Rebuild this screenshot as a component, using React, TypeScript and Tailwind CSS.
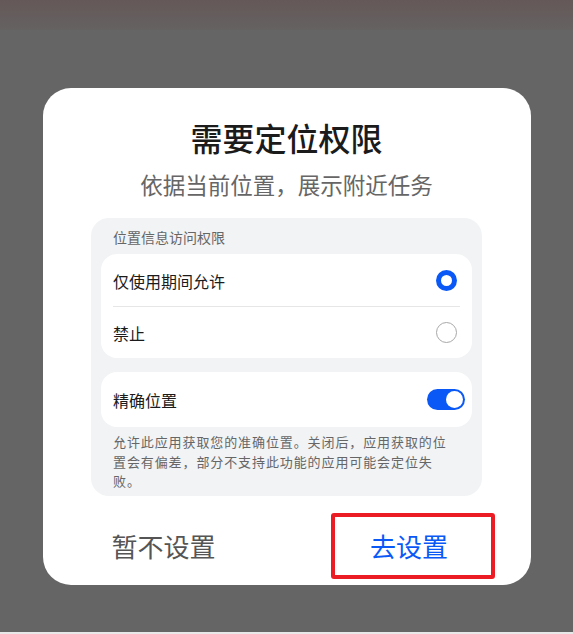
import React from 'react';

function Radio({ checked }: { checked: boolean }) {
  if (checked) {
    return <div className="h-[21px] w-[21px] rounded-full border-[5px] border-[#0a59f7] bg-white" />;
  }
  return <div className="h-[21px] w-[21px] rounded-full border border-[#a8a8a8] bg-white" />;
}

function Toggle() {
  return (
    <div className="flex h-[21px] w-[38px] items-center justify-end rounded-full bg-[#0a59f7] pr-[2px]">
      <div className="h-[17px] w-[17px] rounded-full bg-white" />
    </div>
  );
}

export default function App() {
  return (
    <div
      className="flex h-[634px] w-[573px] flex-col bg-[#656565]"
      style={{ fontFamily: '"Noto Sans CJK SC", "Noto Sans", sans-serif' }}
    >
      <div className="h-[30px] bg-gradient-to-b from-[#655858] to-[#656262]" />
      <div className="flex flex-1 items-start justify-center pt-[58px]">
        <div className="flex w-[488px] flex-col items-center rounded-[28px] bg-white pb-[6px]">
          <h1 className="mt-[29px] text-[32px] leading-[40px] font-medium text-[#1b1b1b]">需要定位权限</h1>
          <p className="mt-[12px] text-[22.5px] leading-[30px] text-[#666]">依据当前位置，展示附近任务</p>

          <div className="mt-[19px] w-[391px] rounded-[18px] bg-[#f1f3f5] px-[10px] pt-[9px] pb-[5px]">
            <div className="px-[12px] text-[14px] leading-[20px] text-[#666]">位置信息访问权限</div>
            <div className="mt-[7px] rounded-[16px] bg-white px-[12px]">
              <div className="flex h-[52px] items-center justify-between pt-[1px]">
                <span className="text-[16px] text-[#1b1b1b]">仅使用期间允许</span>
                <div className="mr-[3px]">
                  <Radio checked />
                </div>
              </div>
              <div className="h-px bg-[#e6e6e6]" />
              <div className="flex h-[51px] items-center justify-between">
                <span className="text-[16px] text-[#1b1b1b]">禁止</span>
                <div className="mr-[3px]">
                  <Radio checked={false} />
                </div>
              </div>
            </div>
            <div className="mt-[14px] flex h-[55px] items-center justify-between rounded-[16px] bg-white pr-[7px] pl-[12px]">
              <span className="text-[16px] text-[#1b1b1b]">精确位置</span>
              <Toggle />
            </div>
            <p className="mt-[5px] px-[12px] text-[13px] leading-[19.5px] tracking-[0.9px] text-[#666]">
              允许此应用获取您的准确位置。关闭后，应用获取的位置会有偏差，部分不支持此功能的应用可能会定位失败。
            </p>
          </div>

          <div className="mt-[17px] flex w-full">
            <div className="flex flex-1 items-center justify-center">
              <span className="pr-[2px] text-[26px] leading-[66px] text-[#555]">暂不设置</span>
            </div>
            <div className="flex flex-1 items-center justify-center">
              <div className="ml-[8px] flex h-[66px] w-[164px] items-center justify-center rounded-[3px] border-[4px] border-[#ec1c24]">
                <span className="pr-[7px] text-[26px] text-[#0a59f7]">去设置</span>
              </div>
            </div>
          </div>
        </div>
      </div>
      <div className="h-[2px] bg-[#e8e8e8]" />
    </div>
  );
}
